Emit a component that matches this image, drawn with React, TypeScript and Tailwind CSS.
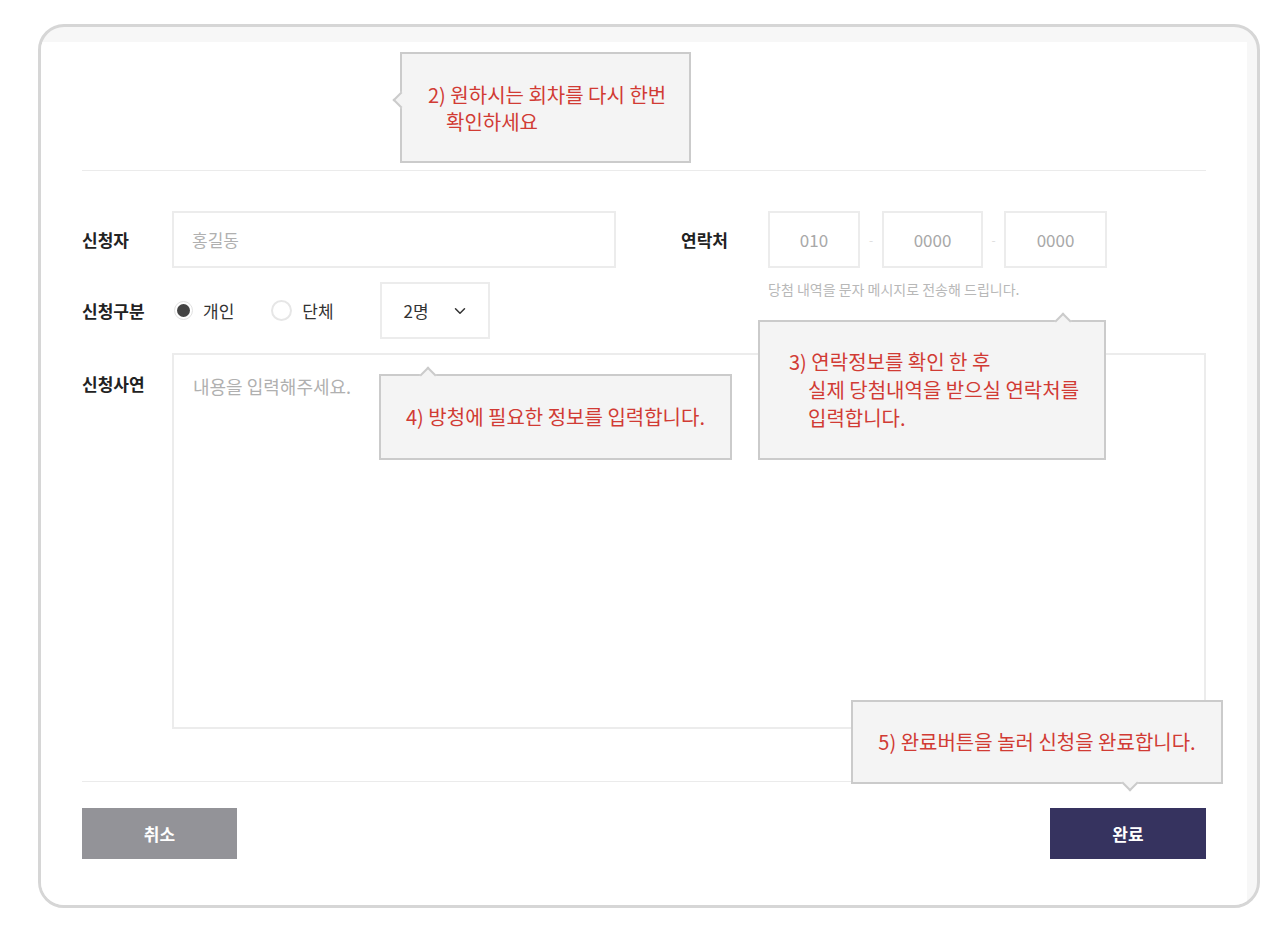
import { ChevronDown } from 'lucide-react';

const font = { fontFamily: '"Noto Sans CJK KR", "Noto Sans", sans-serif' };

type ArrowSide = 'left' | 'top' | 'bottom';

function Arrow({ side, offset }: { side: ArrowSide; offset: number }) {
  // small rotated square that pokes out of the tooltip border
  if (side === 'left') {
    return (
      <span
        className="absolute -left-[7px] h-3 w-3 rotate-45 border-b-2 border-l-2 border-[#cbcbcb] bg-[#f4f4f4]"
        style={{ top: offset - 6 }}
      />
    );
  }
  if (side === 'top') {
    return (
      <span
        className="absolute -top-[7px] h-3 w-3 rotate-45 border-l-2 border-t-2 border-[#cbcbcb] bg-[#f4f4f4]"
        style={{ left: offset - 6 }}
      />
    );
  }
  return (
    <span
      className="absolute -bottom-[7px] h-3 w-3 rotate-45 border-b-2 border-r-2 border-[#cbcbcb] bg-[#f4f4f4]"
      style={{ left: offset - 6 }}
    />
  );
}

export default function App() {
  return (
    <div className="min-h-[936px] w-full bg-white pl-[38px] pt-[24px]" style={font}>
      <div className="relative flex h-[884px] w-[1222px] flex-col overflow-hidden rounded-[26px] border-[3px] border-[#d6d6d6] bg-[#f7f7f7] pr-[10px] pt-[15px]">
        <div className="flex flex-1 flex-col bg-white pl-[41px] pr-[30px]">
          <div className="h-[128px]" />
          <div className="h-px w-[1124px] bg-[#ebebeb]" />

          {/* 신청자 / 연락처 / 신청구분 */}
          <div className="mt-[40px] flex w-[1124px]">
            <div className="flex w-[534px] flex-col gap-[14px]">
              <div className="flex h-[57px] items-center">
                <span className="w-[90px] text-[17px] font-bold text-[#222]">신청자</span>
                <input
                  className="h-full flex-1 border-2 border-[#ececec] pl-[18px] text-[17px] text-[#333] outline-none placeholder:text-[#b0b0b0]"
                  placeholder="홍길동"
                />
              </div>
              <div className="flex h-[57px] items-center">
                <span className="w-[90px] text-[17px] font-bold text-[#222]">신청구분</span>
                <label className="ml-[2px] flex items-center">
                  <span className="flex h-[19px] w-[19px] items-center justify-center rounded-full border border-[#e2e2e2]">
                    <span className="h-[13px] w-[13px] rounded-full bg-[#444]" />
                  </span>
                  <span className="ml-[10px] text-[17px] text-[#333]">개인</span>
                </label>
                <label className="ml-[37px] flex items-center">
                  <span className="h-[21px] w-[21px] rounded-full border-2 border-[#e6e6e6]" />
                  <span className="ml-[10px] text-[17px] text-[#333]">단체</span>
                </label>
                <div className="ml-[46px] flex h-full w-[110px] items-center justify-between border-2 border-[#ececec] pl-[22px] pr-[19px]">
                  <span className="text-[17px] text-[#333]">2명</span>
                  <ChevronDown className="h-[18px] w-[18px] text-[#333]" strokeWidth={2} />
                </div>
              </div>
            </div>

            <div className="ml-[65px] flex flex-col">
              <div className="flex h-[57px] items-center">
                <span className="w-[87px] text-[17px] font-bold text-[#222]">연락처</span>
                <input
                  className="h-full w-[92px] border-2 border-[#ececec] text-center text-[17px] text-[#333] outline-none placeholder:text-[#a8a8a8]"
                  placeholder="010"
                />
                <span className="w-[22px] text-center text-[12px] text-[#dcdcdc]">-</span>
                <input
                  className="h-full w-[101px] border-2 border-[#ececec] text-center text-[17px] text-[#333] outline-none placeholder:text-[#a8a8a8]"
                  placeholder="0000"
                />
                <span className="w-[21px] text-center text-[12px] text-[#dcdcdc]">-</span>
                <input
                  className="h-full w-[103px] border-2 border-[#ececec] text-center text-[17px] text-[#333] outline-none placeholder:text-[#a8a8a8]"
                  placeholder="0000"
                />
              </div>
              <p className="ml-[87px] mt-[12px] text-[14px] leading-[18px] text-[#b8b8b8]">
                당첨 내역을 문자 메시지로 전송해 드립니다.
              </p>
            </div>
          </div>

          {/* 신청사연 */}
          <div className="mt-[14px] flex w-[1124px]">
            <span className="w-[90px] pt-[19px] text-[17px] font-bold leading-[24px] text-[#222]">신청사연</span>
            <textarea
              className="h-[376px] flex-1 resize-none border-2 border-[#ececec] px-[19px] pt-[18px] text-[18px] leading-[26px] text-[#333] outline-none placeholder:text-[#b0b0b0]"
              placeholder="내용을 입력해주세요."
            />
          </div>

          <div className="mt-[52px] h-px w-[1124px] bg-[#ebebeb]" />

          <div className="mt-[26px] flex w-[1124px] justify-between">
            <button className="h-[51px] w-[155px] bg-[#939398] text-[17px] font-bold text-white">취소</button>
            <button className="h-[51px] w-[156px] bg-[#36335f] text-[17px] font-bold text-white">완료</button>
          </div>
        </div>

        {/* Guide tooltips */}
        <div className="absolute left-[359px] top-[25px] flex h-[111px] w-[291px] items-center border-2 border-[#cbcbcb] bg-[#f4f4f4] pl-[26px] text-[20px] leading-[27px] text-[#d13b34]">
          <Arrow side="left" offset={46} />
          <p>
            2) 원하시는 회차를 다시 한번
            <span className="block pl-[18px]">확인하세요</span>
          </p>
        </div>

        <div className="absolute left-[717px] top-[293px] flex h-[140px] w-[348px] items-center border-2 border-[#cbcbcb] bg-[#f4f4f4] pl-[29px] text-[20px] leading-[28px] text-[#d13b34]">
          <Arrow side="top" offset={303} />
          <p>
            3) 연락정보를 확인 한 후
            <span className="block pl-[19px]">실제 당첨내역을 받으실 연락처를</span>
            <span className="block pl-[19px]">입력합니다.</span>
          </p>
        </div>

        <div className="absolute left-[338px] top-[347px] flex h-[86px] w-[353px] items-center justify-center border-2 border-[#cbcbcb] bg-[#f4f4f4] text-[20px] text-[#d13b34]">
          <Arrow side="top" offset={47} />
          <p>4) 방청에 필요한 정보를 입력합니다.</p>
        </div>

        <div className="absolute left-[810px] top-[673px] flex h-[84px] w-[372px] items-center justify-center border-2 border-[#cbcbcb] bg-[#f4f4f4] text-[20px] text-[#d13b34]">
          <Arrow side="bottom" offset={277} />
          <p>5) 완료버튼을 놀러 신청을 완료합니다.</p>
        </div>
      </div>
    </div>
  );
}
